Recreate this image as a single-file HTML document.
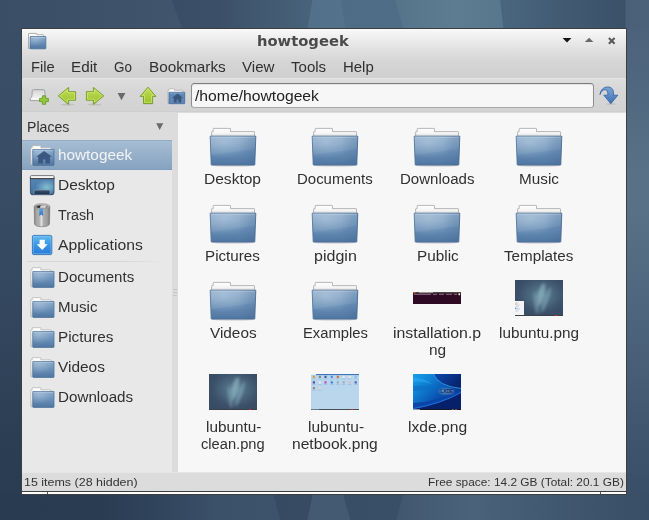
<!DOCTYPE html>
<html><head><meta charset="utf-8"><title>howtogeek</title>
<style>
*{margin:0;padding:0;box-sizing:border-box}
html,body{width:649px;height:520px;overflow:hidden}
body{position:relative;font-family:"Liberation Sans",sans-serif;color:#303030;background:#3a4f67}
#bgL{left:0;top:0;width:22px;height:520px;background:linear-gradient(#3a4e66 0%,#394e66 30%,#34485f 55%,#2b3e54 85%,#293b51 100%)}
#bgR{left:626px;top:0;width:23px;height:520px;background:linear-gradient(#4a5f78 0%,#4f677e 15%,#587186 33%,#587186 40%,#4f677e 58%,#435a72 77%,#3a4f68 93%,#384d66 100%)}
.abs{position:absolute}
.t{position:absolute;white-space:nowrap;line-height:1;transform-origin:0 0}
svg{position:absolute;overflow:visible}
#frame{left:21px;top:28px;width:606px;height:467px;background:#3e3e3e}
#win{left:22px;top:29px;width:604px;height:462px;background:#dcdcdc}
#botw{left:22px;top:492px;width:604px;height:2px;background:#fdfdfd}
#head{left:22px;top:29px;width:604px;height:49px;background:linear-gradient(#f9f9f9 0%,#ececec 22%,#e0e0e0 43%,#d7d7d7 63%,#d2d2d2 84%,#cfcfcf 100%)}
#tool{left:22px;top:78px;width:604px;height:34px;background:linear-gradient(#dedede,#d6d6d6 40%,#d3d3d3);border-top:1px solid #e4e4e4;border-bottom:1px solid #cecece}
#side{left:22px;top:140px;width:150px;height:332px;background:#e8e8e8}
#view{left:178px;top:113px;width:448px;height:359px;background:#f7f7f7}
#status{left:22px;top:472px;width:604px;height:19px;background:#dcdcdc;border-top:1px solid #e6e6e6}
.menu{font-size:15px}
.sb{font-size:15px}
.lab{font-size:15px}
.sel{left:22px;top:140px;width:150px;height:30px;background:linear-gradient(#a6bdd3,#87a3c1);border-top:1px solid #93adc8;border-bottom:1px solid #7f9cbc}
</style></head><body>

<svg width="0" height="0" style="position:absolute">
<defs>
<linearGradient id="gFront" x1="0" y1="0" x2="0" y2="1">
 <stop offset="0" stop-color="#8aabcb"/><stop offset="0.5" stop-color="#6a90b8"/><stop offset="1" stop-color="#4f76a1"/>
</linearGradient>
<radialGradient id="gHi" cx="0.3" cy="0.2" r="0.6">
 <stop offset="0" stop-color="#fff" stop-opacity="0.24"/><stop offset="1" stop-color="#fff" stop-opacity="0"/>
</radialGradient>
<linearGradient id="gRt" x1="0" y1="0" x2="1" y2="0"><stop offset="0" stop-color="#2a4a78" stop-opacity="0"/><stop offset="1" stop-color="#2a4a78" stop-opacity="0.16"/></linearGradient>
<linearGradient id="gBack" x1="0" y1="0" x2="0" y2="1">
 <stop offset="0" stop-color="#ffffff"/><stop offset="0.6" stop-color="#f4f4f4"/><stop offset="1" stop-color="#cfcfcf"/>
</linearGradient>
<linearGradient id="gGreen" x1="0" y1="0" x2="0" y2="1">
 <stop offset="0" stop-color="#c3de5a"/><stop offset="1" stop-color="#99c02c"/>
</linearGradient>
<linearGradient id="gApp" x1="0" y1="0" x2="0" y2="1">
 <stop offset="0" stop-color="#66bcf0"/><stop offset="0.45" stop-color="#3c98e8"/><stop offset="1" stop-color="#2a7ad6"/>
</linearGradient>
<linearGradient id="gCan" x1="0" y1="0" x2="1" y2="0">
 <stop offset="0" stop-color="#787878"/><stop offset="0.12" stop-color="#a4a4a4"/><stop offset="0.34" stop-color="#b4b4b4"/><stop offset="0.47" stop-color="#e2e2e2"/><stop offset="0.58" stop-color="#b0b0b0"/><stop offset="0.85" stop-color="#9a9a9a"/><stop offset="1" stop-color="#767676"/>
</linearGradient>
<linearGradient id="gDesk" x1="0" y1="0" x2="0" y2="1">
 <stop offset="0" stop-color="#5a84b2"/><stop offset="0.6" stop-color="#4c7cac"/><stop offset="1" stop-color="#3a6898"/>
</linearGradient>
<linearGradient id="gPanel" x1="0" y1="0" x2="0" y2="1">
 <stop offset="0" stop-color="#3c5470"/><stop offset="1" stop-color="#1c2e48"/>
</linearGradient>
<linearGradient id="gStk" x1="0" y1="0" x2="0" y2="1">
 <stop offset="0" stop-color="#58a6e8"/><stop offset="1" stop-color="#2a76c6"/>
</linearGradient>
<radialGradient id="gDeskHi" cx="0.7" cy="0.55" r="0.5">
 <stop offset="0" stop-color="#8fd0dc" stop-opacity="0.8"/><stop offset="1" stop-color="#8fd0dc" stop-opacity="0"/>
</radialGradient>
<linearGradient id="gTab" x1="0" y1="0" x2="0" y2="1">
 <stop offset="0" stop-color="#d4d4d4"/><stop offset="1" stop-color="#fbfbfb"/>
</linearGradient>
<linearGradient id="gGo" x1="0" y1="0" x2="0" y2="1">
 <stop offset="0" stop-color="#7aa6d8"/><stop offset="1" stop-color="#3f70b4"/>
</linearGradient>
<radialGradient id="gWall" cx="0.55" cy="0.42" r="0.6">
 <stop offset="0" stop-color="#688c9e"/><stop offset="0.35" stop-color="#4e6b81"/><stop offset="0.8" stop-color="#3b5169"/><stop offset="1" stop-color="#384d65"/>
</radialGradient>
<filter id="blur1" x="-50%" y="-50%" width="200%" height="200%"><feGaussianBlur stdDeviation="1.6"/></filter>
<filter id="blur05" x="-50%" y="-50%" width="200%" height="200%"><feGaussianBlur stdDeviation="0.8"/></filter>
<clipPath id="cpA"><rect x="515" y="280" width="48" height="36"/></clipPath>
<clipPath id="cpB"><rect x="209" y="374" width="48" height="36"/></clipPath>
<clipPath id="cpC"><rect x="413" y="374" width="48" height="36"/></clipPath>
<linearGradient id="gLxD" x1="0" y1="0" x2="1" y2="0.5">
 <stop offset="0" stop-color="#0c48ac"/><stop offset="1" stop-color="#062470"/>
</linearGradient>
<linearGradient id="gLx" x1="0" y1="0" x2="1" y2="0.75">
 <stop offset="0" stop-color="#16a0ec"/><stop offset="0.3" stop-color="#0f80d4"/><stop offset="0.62" stop-color="#0a54b0"/><stop offset="1" stop-color="#062878"/>
</linearGradient>

<!-- big folder 48x38 (origin at x=209,y=127 relative offsets) -->
<symbol id="folder" viewBox="0 0 48 40" overflow="visible">
 <ellipse cx="24" cy="38.6" rx="21" ry="1.2" fill="#000" opacity="0.13"/>
 <path d="M2.6 9 L2.6 5.1 Q2.6 4.6 3.1 4.6 L4.2 4.6 L4.2 1.9 Q4.2 1.4 4.7 1.4 L21 1.4 Q21.5 1.4 21.5 1.9 L21.5 4.6 L45 4.6 Q45.5 4.6 45.5 5.1 L45.5 10 L2.6 10 Z" fill="url(#gBack)" stroke="#a6a6a6" stroke-width="0.8"/>
 <path d="M1.2 9.2 L46.8 9.2 L45.8 37.6 Q45.8 38.1 45.3 38.1 L2.7 38.1 Q2.2 38.1 2.2 37.6 Z" fill="url(#gFront)" stroke="#4c6f97" stroke-width="0.9"/>
 <path d="M1.2 9.2 L46.8 9.2 L45.8 37.6 L2.2 37.6 Z" fill="url(#gHi)"/>
 <path d="M2.2 10.2 L45.8 10.2" stroke="#b4cbe0" stroke-width="0.9" opacity="0.9"/>
 <path d="M1.8 9.8 L46.2 9.8 L45.6 22 Q24 25 2.3 28 Z" fill="#fff" opacity="0.07"/>
 <path d="M30 9.2 L46.8 9.2 L45.8 37.6 L30 37.6 Z" fill="url(#gRt)"/>
</symbol>

<!-- small folder 24x21 -->
<symbol id="sfolder" viewBox="0 0 25 22" overflow="visible" preserveAspectRatio="none">
 <path d="M0.8 19.6 L0.8 3.4 Q0.8 2.9 1.3 2.9 L2.2 2.9 L2.2 1.2 Q2.2 0.7 2.7 0.7 L10.4 0.7 Q10.9 0.7 10.9 1.2 L10.9 2.9 L20.6 2.9 Q21.1 2.9 21.1 3.4 L21.1 6 L3 6 L3 19.6 Q3 20 2.4 20.2 L1.4 20.2 Q0.8 20.2 0.8 19.6 Z" fill="url(#gBack)" stroke="#b0b0b0" stroke-width="0.7"/>
 <path d="M2.8 4.6 L24 4.6 L24 20.4 Q24 20.9 23.5 20.9 L3.3 20.9 Q2.8 20.9 2.8 20.4 Z" fill="url(#gFront)" stroke="#4f739b" stroke-width="0.8"/>
 <path d="M2.8 4.6 L24 4.6 L24 20.4 L2.8 20.4 Z" fill="url(#gHi)"/>
 <path d="M3.6 5.5 L23.3 5.5" stroke="#b4cbe0" stroke-width="0.8" opacity="0.8"/>
</symbol>

<symbol id="house" viewBox="0 0 17 13" overflow="visible">
 <path d="M8.4 0 L16.6 6 L14.4 6 L14.4 12.8 L9.8 12.8 L9.8 8.6 L7.2 8.6 L7.2 12.8 L2.3 12.8 L2.3 6 L0.2 6 Z" fill="#3a5880"/>
</symbol>
</defs>
</svg>

<div class="abs" id="bgL"></div><div class="abs" id="bgR"></div><svg style="left:0;top:0px" width="649" height="29" viewBox="0 0 649 29"><defs><linearGradient id="gt0" gradientUnits="userSpaceOnUse" x1="0" y1="0" x2="183" y2="0"><stop offset="0.000" stop-color="#3a4e66"/><stop offset="0.546" stop-color="#3d5269"/><stop offset="1.000" stop-color="#41566d"/></linearGradient><linearGradient id="gt1" gradientUnits="userSpaceOnUse" x1="172" y1="0" x2="313" y2="0"><stop offset="0.000" stop-color="#394e66"/><stop offset="0.319" stop-color="#3b5068"/><stop offset="1.000" stop-color="#48637b"/></linearGradient><linearGradient id="gt2" gradientUnits="userSpaceOnUse" x1="308" y1="0" x2="345.8" y2="0"><stop offset="0.000" stop-color="#52708a"/><stop offset="1.000" stop-color="#54728b"/></linearGradient><linearGradient id="gt3" gradientUnits="userSpaceOnUse" x1="341.4" y1="0" x2="404" y2="0"><stop offset="0.000" stop-color="#4e6c85"/><stop offset="1.000" stop-color="#4f6d86"/></linearGradient><linearGradient id="gt4" gradientUnits="userSpaceOnUse" x1="396" y1="0" x2="504" y2="0"><stop offset="0.000" stop-color="#567489"/><stop offset="0.546" stop-color="#5d7c92"/><stop offset="1.000" stop-color="#58778d"/></linearGradient><linearGradient id="gt5" gradientUnits="userSpaceOnUse" x1="500.6" y1="0" x2="626" y2="0"><stop offset="0.000" stop-color="#4a667f"/><stop offset="0.474" stop-color="#425b73"/><stop offset="1.000" stop-color="#3a5168"/></linearGradient><linearGradient id="gt6" gradientUnits="userSpaceOnUse" x1="626" y1="0" x2="649" y2="0"><stop offset="0.000" stop-color="#4a5f78"/><stop offset="1.000" stop-color="#4b617a"/></linearGradient></defs><polygon points="-0.5,0 172.5,0 183.5,29 -0.5,29" fill="url(#gt0)"/><polygon points="171.5,0 313.5,0 308.5,29 182.5,29" fill="url(#gt1)"/><polygon points="312.5,0 341.9,0 346.3,29 307.5,29" fill="url(#gt2)"/><polygon points="340.9,0 396.5,0 404.5,29 345.3,29" fill="url(#gt3)"/><polygon points="395.5,0 501.1,0 504.5,29 403.5,29" fill="url(#gt4)"/><polygon points="500.1,0 626.5,0 626.5,29 503.5,29" fill="url(#gt5)"/><polygon points="625.5,0 649.5,0 649.5,29 625.5,29" fill="url(#gt6)"/></svg><svg style="left:0;top:494px" width="649" height="26" viewBox="0 494 649 26"><defs><linearGradient id="gb0" gradientUnits="userSpaceOnUse" x1="0" y1="0" x2="280.5" y2="0"><stop offset="0.000" stop-color="#293b51"/><stop offset="0.357" stop-color="#2a3c52"/><stop offset="0.535" stop-color="#2f435a"/><stop offset="0.774" stop-color="#3b5069"/><stop offset="1.000" stop-color="#3d526b"/></linearGradient><linearGradient id="gb1" gradientUnits="userSpaceOnUse" x1="273.9" y1="0" x2="313.3" y2="0"><stop offset="0.000" stop-color="#364a62"/><stop offset="1.000" stop-color="#374b63"/></linearGradient><linearGradient id="gb2" gradientUnits="userSpaceOnUse" x1="308" y1="0" x2="350.8" y2="0"><stop offset="0.000" stop-color="#445a73"/><stop offset="1.000" stop-color="#445a73"/></linearGradient><linearGradient id="gb3" gradientUnits="userSpaceOnUse" x1="343.4" y1="0" x2="403.6" y2="0"><stop offset="0.000" stop-color="#384d66"/><stop offset="1.000" stop-color="#394e67"/></linearGradient><linearGradient id="gb4" gradientUnits="userSpaceOnUse" x1="397" y1="0" x2="649" y2="0"><stop offset="0.000" stop-color="#41576f"/><stop offset="0.147" stop-color="#465d76"/><stop offset="0.290" stop-color="#4b627b"/><stop offset="0.567" stop-color="#435a73"/><stop offset="1.000" stop-color="#384d66"/></linearGradient></defs><polygon points="-0.5,494 274.4,494 281.0,520 -0.5,520" fill="url(#gb0)"/><polygon points="273.4,494 313.8,494 308.5,520 280.0,520" fill="url(#gb1)"/><polygon points="312.8,494 343.9,494 351.3,520 307.5,520" fill="url(#gb2)"/><polygon points="342.9,494 404.1,494 397.5,520 350.3,520" fill="url(#gb3)"/><polygon points="403.1,494 649.5,494 649.5,520 396.5,520" fill="url(#gb4)"/></svg><div class="abs" id="frame"></div><div class="abs" id="win"></div><div class="abs" id="botw"></div><div class="abs" id="head"></div><div class="abs" id="tool"></div><div class="abs" id="side"></div><div class="abs" id="view"></div><div class="abs" id="status"></div>
<svg style="left:0;top:0" width="649" height="520"><path d="M28.5 48.4 V34 Q28.5 33.4 29.1 33.4 H36.2 Q36.8 33.4 36.8 34 V34.7 H43 Q43.6 34.7 43.6 35.3 V37 H30.4 V48.4 Z" fill="url(#gBack)" stroke="#9c9c9c" stroke-width="0.8"/><path d="M30.2 36.6 H45.8 V48.3 Q45.8 48.8 45.3 48.8 H30.7 Q30.2 48.8 30.2 48.3 Z" fill="url(#gFront)" stroke="#4a6d97" stroke-width="0.8"/><path d="M30.2 36.6 H45.8 V48.3 H30.2 Z" fill="url(#gHi)"/><path d="M30.9 37.5 H45.1" stroke="#bdd2e6" stroke-width="0.8" opacity="0.85"/></svg>
<svg style="left:0;top:0" width="649" height="520"><path d="M562.6 38 L571.4 38 L567 42.4 Z" fill="#141414"/><path d="M584.8 42 L593.4 42 L589.1 37.7 Z" fill="#6a6a6a"/><path d="M608.9 38 L614.6 43.7 M614.6 38 L608.9 43.7" stroke="#5a5a5a" stroke-width="2.1" stroke-linecap="butt"/></svg>
<svg style="left:0;top:0" width="649" height="520"><path d="M30.2 100.6 L30.2 98.6 Q31.9 97.6 32 95.5 L32.2 91 Q32.3 89.7 33.6 89.7 L43.4 89.7 Q44.7 89.7 44.8 91 L45 95.5 Q45.1 97.6 46.8 98.6 L46.8 100.6 Z" fill="url(#gTab)" stroke="#9a9a9a" stroke-width="0.9"/><path d="M42.3 95.8 L45.6 95.8 L45.6 98.4 L48.4 98.4 L48.4 101.6 L45.6 101.6 L45.6 104.3 L42.3 104.3 L42.3 101.6 L39.5 101.6 L39.5 98.4 L42.3 98.4 Z" fill="#92c83c" stroke="#6a9e2a" stroke-width="0.9" stroke-linejoin="round"/><ellipse cx="67.5" cy="104.6" rx="7" ry="1" fill="#000" opacity="0.1"/><path d="M58.3 95.9 L68.6 87.4 L68.6 91.7 L75.6 91.7 L75.6 100.2 L68.6 100.2 L68.6 104.4 Z" fill="url(#gGreen)" stroke="#76a026" stroke-width="1" stroke-linejoin="round"/><ellipse cx="94.5" cy="104.6" rx="7" ry="1" fill="#000" opacity="0.1"/><path d="M103.7 95.9 L93.4 87.4 L93.4 91.7 L86.4 91.7 L86.4 100.2 L93.4 100.2 L93.4 104.4 Z" fill="url(#gGreen)" stroke="#76a026" stroke-width="1" stroke-linejoin="round"/><path d="M59.9 95.9 L67.6 89.5 L67.6 92.7 L74.6 92.7 L74.6 99.2 L67.6 99.2 L67.6 102.3 Z" fill="none" stroke="#d2ea7c" stroke-width="0.8" opacity="0.85"/><path d="M102.1 95.9 L94.4 89.5 L94.4 92.7 L87.4 92.7 L87.4 99.2 L94.4 99.2 L94.4 102.3 Z" fill="none" stroke="#d2ea7c" stroke-width="0.8" opacity="0.85"/><path d="M117.6 93 L125.4 93 L121.5 100.3 Z" fill="#6a6a6a"/><ellipse cx="148" cy="103.9" rx="6" ry="0.9" fill="#000" opacity="0.1"/><path d="M148 87.2 L155.9 96.4 L152.6 96.4 L152.6 103.4 L143.5 103.4 L143.5 96.4 L140.2 96.4 Z" fill="url(#gGreen)" stroke="#76a026" stroke-width="1" stroke-linejoin="round"/><path d="M148 88.8 L153.7 95.4 L151.6 95.4 L151.6 102.4 L144.5 102.4 L144.5 95.4 L142.4 95.4 Z" fill="none" stroke="#d2ea7c" stroke-width="0.8" opacity="0.85"/><ellipse cx="610.8" cy="104" rx="5" ry="0.8" fill="#000" opacity="0.1"/><path d="M600 94.6 C600.5 90 603.5 87 607.5 87 C611.5 87 613.5 89.5 613.5 92.5 L613.5 95.2 L617.8 95.2 L610.8 103.7 L603.8 95.2 L607.8 95.2 L607.8 93.5 C607.8 91 606.6 89.7 605 89.7 C602.8 89.7 601 91.6 600 94.6 Z" fill="url(#gGo)" stroke="#2f5f9f" stroke-width="0.8" stroke-linejoin="round"/></svg>
<svg style="left:0;top:0" width="649" height="520"><path d="M168 103.3 V90.8 Q168 90.3 168.5 90.3 H169 V89.3 Q169 88.8 169.5 88.8 H174 Q174.5 88.8 174.5 89.3 V90.3 H182.2 Q182.7 90.3 182.7 90.8 V92.6 H169.4 V103.3 Z" fill="url(#gBack)" stroke="#a8a8a8" stroke-width="0.7"/><path d="M169 92.3 H184.7 V103.2 Q184.7 103.7 184.2 103.7 H169.5 Q169 103.7 169 103.2 Z" fill="#5f87b6" stroke="#446a9a" stroke-width="0.8"/><path d="M169.7 93.1 H184" stroke="#a9c2dc" stroke-width="0.7" opacity="0.8"/><path d="M177.5 93.5 L183 97.9 L181.3 97.9 L181.3 102.5 L178.4 102.5 L178.4 99.6 L176.7 99.6 L176.7 102.5 L173.8 102.5 L173.8 97.9 L172.1 97.9 Z" fill="#3a567c"/></svg>
<div class="abs" style="left:190.5px;top:83px;width:403.5px;height:25px;background:#f7f7f7;border:1px solid #8e8e8e;border-top-color:#7c7c7c;border-bottom-color:#a8a8a8;border-radius:3.5px;box-shadow:inset 0 1px 1px rgba(0,0,0,.08)"></div>
<div class="abs" style="left:47px;top:492px;width:1px;height:2px;background:#555"></div><div class="abs" style="left:600px;top:492px;width:1px;height:2px;background:#555"></div>
<svg style="left:0;top:0" width="649" height="520"><path d="M156.2 123.3 L163.2 123.3 L159.7 130 Z" fill="#6a6a6a"/></svg>
<div class="abs sel"></div>
<div class="abs" style="left:27px;top:261px;width:138px;height:1px;background:linear-gradient(90deg,#d6d6d6 70%,rgba(214,214,214,0))"></div>
<div class="abs" style="left:173px;top:289px;width:4px;height:1px;background:#c6c6c6;box-shadow:0 3px 0 #c6c6c6,0 6px 0 #c6c6c6"></div>
<svg style="left:29.8px;top:144.9px" width="25" height="21.5"><use href="#sfolder" width="25" height="21.5"/></svg>
<svg style="left:36px;top:151px" width="16.4" height="12.7"><use href="#house" width="16.4" height="12.7"/></svg>
<svg style="left:0;top:0" width="649" height="520"><path d="M30.4 177 L30.4 192.6 Q30.4 194.7 32.5 194.7 L51.9 194.7 Q54 194.7 54 192.6 L54 177 Z" fill="url(#gDesk)" stroke="#2c486c" stroke-width="0.8"/><path d="M30.8 178.8 L53.6 178.8 L53.6 192.6 Q53.6 194.3 51.9 194.3 L32.5 194.3 Q30.8 194.3 30.8 192.6 Z" fill="url(#gDeskHi)"/><path d="M30.4 178.6 L30.4 176.6 Q30.4 175.6 31.4 175.6 L53 175.6 Q54 175.6 54 176.6 L54 178.6 Z" fill="#f6f6f6" stroke="#5c5c5c" stroke-width="0.8"/><rect x="30" y="178.2" width="24.4" height="0.9" fill="#3e3e3e"/><rect x="34" y="190" width="16" height="4.6" fill="url(#gPanel)" stroke="#9ab8d2" stroke-width="0.5"/><rect x="30.8" y="194.3" width="22.8" height="0.6" fill="#1c3050" opacity="0.6"/><path d="M34.2 206.4 L34.5 223.6 Q34.7 226.7 42 226.7 Q49.3 226.7 49.5 223.6 L49.8 206.4 Z" fill="url(#gCan)" stroke="#707070" stroke-width="0.6"/><ellipse cx="42" cy="206.3" rx="7.8" ry="2.6" fill="#b8b8b8" stroke="#8a8a8a" stroke-width="0.6"/><ellipse cx="41.6" cy="206.6" rx="6.2" ry="1.7" fill="#6a6a6a"/><path d="M37 206.9 Q38.4 205.6 40.4 205.9 L39.6 207.8 Q38 208 37 206.9 Z" fill="#2a2a2a"/><path d="M40.6 205.8 Q43.5 204.9 46.8 205.8 L45 208 Q42.5 207.4 40.2 207.9 Z" fill="#e4e4e6" opacity="0.9"/><rect x="43.2" y="205.6" width="1.2" height="1" fill="#e8a8d8" opacity="0.8"/><path d="M39.3 208.4 L43 208.7 L43 215.9 L41.2 214.5 L39.3 215.9 Z" fill="url(#gStk)"/><rect x="32.4" y="235.4" width="19.4" height="19.2" rx="1.4" fill="url(#gApp)" stroke="#1c5fa6" stroke-width="0.8"/><rect x="33.2" y="236.2" width="17.8" height="17.6" rx="0.8" fill="none" stroke="#9ad4f8" stroke-width="0.7" opacity="0.7"/><path d="M39.6 239.8 L44.8 239.8 L44.8 244.2 L47.7 244.2 L42.2 250 L36.7 244.2 L39.6 244.2 Z" fill="#fff"/></svg>
<svg style="left:29.8px;top:266.9px" width="25" height="21.5"><use href="#sfolder" width="25" height="21.5"/></svg>
<svg style="left:29.8px;top:296.9px" width="25" height="21.5"><use href="#sfolder" width="25" height="21.5"/></svg>
<svg style="left:29.8px;top:326.9px" width="25" height="21.5"><use href="#sfolder" width="25" height="21.5"/></svg>
<svg style="left:29.8px;top:356.9px" width="25" height="21.5"><use href="#sfolder" width="25" height="21.5"/></svg>
<svg style="left:29.8px;top:386.9px" width="25" height="21.5"><use href="#sfolder" width="25" height="21.5"/></svg>
<svg style="left:209px;top:126.8px" width="48" height="40"><use href="#folder" width="48" height="40"/></svg>
<svg style="left:311px;top:126.8px" width="48" height="40"><use href="#folder" width="48" height="40"/></svg>
<svg style="left:413px;top:126.8px" width="48" height="40"><use href="#folder" width="48" height="40"/></svg>
<svg style="left:515px;top:126.8px" width="48" height="40"><use href="#folder" width="48" height="40"/></svg>
<svg style="left:209px;top:203.8px" width="48" height="40"><use href="#folder" width="48" height="40"/></svg>
<svg style="left:311px;top:203.8px" width="48" height="40"><use href="#folder" width="48" height="40"/></svg>
<svg style="left:413px;top:203.8px" width="48" height="40"><use href="#folder" width="48" height="40"/></svg>
<svg style="left:515px;top:203.8px" width="48" height="40"><use href="#folder" width="48" height="40"/></svg>
<svg style="left:209px;top:280.8px" width="48" height="40"><use href="#folder" width="48" height="40"/></svg>
<svg style="left:311px;top:280.8px" width="48" height="40"><use href="#folder" width="48" height="40"/></svg>
<svg style="left:0;top:0" width="649" height="520"><rect x="413" y="292" width="48" height="12" fill="#2e0a24"/><rect x="413" y="292" width="48" height="1.3" fill="#4a4843"/><rect x="413.5" y="292.1" width="2" height="1.1" fill="#e07030"/><rect x="419" y="292.2" width="14" height="0.9" fill="#c8c4bc" opacity="0.8"/><path d="M414 294.3 H431 M433 294.3 H437 M439 294.3 H444 M446 294.3 H452 M454 294.3 H457" stroke="#c9b8c6" stroke-width="0.8" opacity="0.75"/><rect x="458.5" y="293.4" width="1.6" height="1.8" fill="#fff"/><g clip-path="url(#cpA)"><rect x="515" y="280" width="48" height="36" fill="url(#gWall)"/><g filter="url(#blur1)" opacity="0.8"><ellipse cx="541" cy="295" rx="3.2" ry="12" fill="#86acb8" transform="rotate(14 541 295)"/><ellipse cx="546" cy="300" rx="2" ry="13" fill="#7a9fb0" transform="rotate(20 546 300)"/><ellipse cx="536" cy="303" rx="2" ry="11" fill="#6f93a6" transform="rotate(-8 536 303)"/></g></g><rect x="515" y="301" width="9" height="14" fill="#f2f4f6"/><path d="M515.6 303 H518.4 M515.6 305 H519.4 M515.6 307 H518.6 M515.6 309 H520 M515.6 311 H518.2" stroke="#a8b4c4" stroke-width="0.6"/><rect x="515" y="303.4" width="1.2" height="1.2" fill="#e0b040"/><rect x="515" y="307.8" width="1.2" height="1.2" fill="#4a90d8"/><rect x="515" y="315" width="48" height="1" fill="#3a4048"/><rect x="555" y="315" width="2.4" height="1" fill="#c03030"/><g clip-path="url(#cpB)"><rect x="209" y="374" width="48" height="36" fill="url(#gWall)"/><g filter="url(#blur1)" opacity="0.8"><ellipse cx="235" cy="389" rx="3.2" ry="12" fill="#86acb8" transform="rotate(14 235 389)"/><ellipse cx="240" cy="394" rx="2" ry="13" fill="#7a9fb0" transform="rotate(20 240 394)"/><ellipse cx="230" cy="397" rx="2" ry="11" fill="#6f93a6" transform="rotate(-8 230 397)"/></g></g><rect x="209" y="409" width="48" height="1" fill="#3a4048"/><rect x="249" y="409" width="2.4" height="1" fill="#c03030"/><rect x="311" y="374" width="48" height="36" fill="#b9d6ec"/><rect x="311" y="374" width="48" height="1.1" fill="#3f74ba"/><rect x="311" y="374" width="5" height="1.1" fill="#e8eef6"/><rect x="311" y="409" width="48" height="1" fill="#4a4c54"/><rect x="351" y="409" width="2.2" height="1" fill="#c03038"/><rect x="311" y="409" width="8" height="1" fill="#6a7a90"/>
<rect x="312.8" y="375.7" width="2.2" height="2.3" rx="0.4" fill="#e89030" opacity="0.9"/><rect x="311.9" y="378.6" width="4" height="0.7" fill="#8fb4d8" opacity="0.7"/><rect x="318.8" y="375.7" width="2.2" height="2.3" rx="0.4" fill="#8a8078" opacity="0.9"/><rect x="317.9" y="378.6" width="4" height="0.7" fill="#8fb4d8" opacity="0.7"/><rect x="324.4" y="375.7" width="2.2" height="2.3" rx="0.4" fill="#3a4a90" opacity="0.9"/><rect x="323.5" y="378.6" width="4" height="0.7" fill="#8fb4d8" opacity="0.7"/><rect x="330.7" y="375.7" width="2.2" height="2.3" rx="0.4" fill="#3a8ae0" opacity="0.9"/><rect x="329.8" y="378.6" width="4" height="0.7" fill="#8fb4d8" opacity="0.7"/><rect x="336.7" y="375.7" width="2.2" height="2.3" rx="0.4" fill="#d86030" opacity="0.9"/><rect x="335.8" y="378.6" width="4" height="0.7" fill="#8fb4d8" opacity="0.7"/><rect x="342.6" y="375.7" width="2.2" height="2.3" rx="0.4" fill="#e8ecf2" opacity="0.9"/><rect x="341.7" y="378.6" width="4" height="0.7" fill="#8fb4d8" opacity="0.7"/><rect x="348.6" y="375.7" width="2.2" height="2.3" rx="0.4" fill="#f0e8e8" opacity="0.9"/><rect x="347.7" y="378.6" width="4" height="0.7" fill="#8fb4d8" opacity="0.7"/><rect x="354.6" y="375.7" width="2.2" height="2.3" rx="0.4" fill="#7ac0f0" opacity="0.9"/><rect x="353.7" y="378.6" width="4" height="0.7" fill="#8fb4d8" opacity="0.7"/><rect x="312.8" y="381.3" width="2.2" height="2.3" rx="0.4" fill="#4a3a98" opacity="0.9"/><rect x="311.9" y="384.2" width="4" height="0.7" fill="#8fb4d8" opacity="0.7"/><rect x="318.8" y="381.3" width="2.2" height="2.3" rx="0.4" fill="#e6eef8" opacity="0.9"/><rect x="317.9" y="384.2" width="4" height="0.7" fill="#8fb4d8" opacity="0.7"/><rect x="324.4" y="381.3" width="2.2" height="2.3" rx="0.4" fill="#c838b0" opacity="0.9"/><rect x="323.5" y="384.2" width="4" height="0.7" fill="#8fb4d8" opacity="0.7"/><rect x="330.7" y="381.3" width="2.2" height="2.3" rx="0.4" fill="#2a7ae0" opacity="0.9"/><rect x="329.8" y="384.2" width="4" height="0.7" fill="#8fb4d8" opacity="0.7"/><rect x="336.7" y="381.3" width="2.2" height="2.3" rx="0.4" fill="#98a4b4" opacity="0.9"/><rect x="335.8" y="384.2" width="4" height="0.7" fill="#8fb4d8" opacity="0.7"/><rect x="342.6" y="381.3" width="2.2" height="2.3" rx="0.4" fill="#a0a8b8" opacity="0.9"/><rect x="341.7" y="384.2" width="4" height="0.7" fill="#8fb4d8" opacity="0.7"/><rect x="348.6" y="381.3" width="2.2" height="2.3" rx="0.4" fill="#d8b8c0" opacity="0.9"/><rect x="347.7" y="384.2" width="4" height="0.7" fill="#8fb4d8" opacity="0.7"/><rect x="354.6" y="381.3" width="2.2" height="2.3" rx="0.4" fill="#3858a8" opacity="0.9"/><rect x="353.7" y="384.2" width="4" height="0.7" fill="#8fb4d8" opacity="0.7"/><rect x="312.8" y="386.9" width="2.2" height="2.3" rx="0.4" fill="#a08078" opacity="0.9"/><rect x="311.9" y="389.8" width="4" height="0.7" fill="#8fb4d8" opacity="0.7"/><rect x="318.8" y="386.9" width="2.2" height="2.3" rx="0.4" fill="#e8d8c0" opacity="0.9"/><rect x="317.9" y="389.8" width="4" height="0.7" fill="#8fb4d8" opacity="0.7"/>
<g clip-path="url(#cpC)"><rect x="413" y="374" width="48" height="36" fill="url(#gLx)"/><path d="M433.5 374 Q438 386 461 388.5 L461 374 Z" fill="url(#gLxD)"/><path d="M413 409 Q440 404 461 392.5 L461 410 L413 410 Z" fill="#06206a"/><path d="M413 403 Q436 402 461 390 L461 393 Q440 405 413 409 Z" fill="#0a44a8" opacity="0.9"/><path d="M433.5 374 Q438 386 461 388.5" stroke="#38b0f8" stroke-width="0.8" fill="none" opacity="0.9"/><path d="M413 408.6 Q440 404 461 392.5" stroke="#2a84e8" stroke-width="0.8" fill="none" opacity="0.9"/><path d="M413 386 Q430 384.5 446 387.5 Q430 390 413 391 Z" fill="#0a6cc0" opacity="0.55"/><path d="M413 378 Q424 377 432 384 Q424 381 413 381.5 Z" fill="#30b4f4" opacity="0.45"/></g><ellipse cx="446.6" cy="391.4" rx="7.4" ry="2.8" fill="#9cc4f0" opacity="0.55" filter="url(#blur05)"/><text x="440.4" y="393.2" font-family="Liberation Sans, sans-serif" font-size="5.2" font-weight="bold" fill="#14244c" textLength="12.6" lengthAdjust="spacingAndGlyphs">LXDE</text><rect x="413" y="409" width="48" height="1" fill="#161a28"/><rect x="413" y="409" width="7" height="1" fill="#8a98a8"/><rect x="455" y="409" width="2" height="1" fill="#b03040"/><rect x="452" y="409" width="1.6" height="1" fill="#30a040"/></svg>
<div class="t" style="left:257px;top:34px;font-size:14.5px;transform:scaleX(1.0156);font-family:'DejaVu Sans','Liberation Sans',sans-serif;font-weight:bold;color:#4a4a4a">howtogeek</div>
<div class="t" style="left:31px;top:60px;font-size:14px;transform:scaleX(1.0521);">File</div>
<div class="t" style="left:71px;top:60px;font-size:14px;transform:scaleX(1.0884);">Edit</div>
<div class="t" style="left:114px;top:60px;font-size:14px;transform:scaleX(0.9585);">Go</div>
<div class="t" style="left:149px;top:60px;font-size:14px;transform:scaleX(1.0963);">Bookmarks</div>
<div class="t" style="left:242px;top:60px;font-size:14px;transform:scaleX(1.0790);">View</div>
<div class="t" style="left:291px;top:60px;font-size:14px;transform:scaleX(1.0742);">Tools</div>
<div class="t" style="left:343px;top:60px;font-size:14px;transform:scaleX(1.0669);">Help</div>
<div class="t" style="left:195px;top:89px;font-size:14px;transform:scaleX(1.1216);color:#222">/home/howtogeek</div>
<div class="t" style="left:27px;top:120px;font-size:14px;transform:scaleX(1.0074);">Places</div>
<div class="t" style="left:58px;top:148px;font-size:14px;transform:scaleX(1.0946);color:#f4f4f4">howtogeek</div>
<div class="t" style="left:58px;top:178px;font-size:14px;transform:scaleX(1.1055);">Desktop</div>
<div class="t" style="left:58px;top:208px;font-size:14px;transform:scaleX(1.0195);">Trash</div>
<div class="t" style="left:58px;top:238px;font-size:14px;transform:scaleX(1.1231);">Applications</div>
<div class="t" style="left:58px;top:270px;font-size:14px;transform:scaleX(1.0757);">Documents</div>
<div class="t" style="left:58px;top:300px;font-size:14px;transform:scaleX(1.0785);">Music</div>
<div class="t" style="left:58px;top:330px;font-size:14px;transform:scaleX(1.0937);">Pictures</div>
<div class="t" style="left:58px;top:360px;font-size:14px;transform:scaleX(1.1017);">Videos</div>
<div class="t" style="left:58px;top:390px;font-size:14px;transform:scaleX(1.0849);">Downloads</div>
<div class="t" style="left:204px;top:172px;font-size:14px;transform:scaleX(1.1099);">Desktop</div>
<div class="t" style="left:297px;top:172px;font-size:14px;transform:scaleX(1.0692);">Documents</div>
<div class="t" style="left:400px;top:172px;font-size:14px;transform:scaleX(1.0750);">Downloads</div>
<div class="t" style="left:519px;top:172px;font-size:14px;transform:scaleX(1.0919);">Music</div>
<div class="t" style="left:205px;top:249px;font-size:14px;transform:scaleX(1.0858);">Pictures</div>
<div class="t" style="left:314px;top:249px;font-size:14px;transform:scaleX(1.1458);">pidgin</div>
<div class="t" style="left:417px;top:249px;font-size:14px;transform:scaleX(1.0936);">Public</div>
<div class="t" style="left:504px;top:249px;font-size:14px;transform:scaleX(1.0855);">Templates</div>
<div class="t" style="left:210px;top:326px;font-size:14px;transform:scaleX(1.0945);">Videos</div>
<div class="t" style="left:303px;top:326px;font-size:14px;transform:scaleX(1.0547);">Examples</div>
<div class="t" style="left:393px;top:326px;font-size:14px;transform:scaleX(1.1326);">installation.p</div>
<div class="t" style="left:429px;top:343px;font-size:14px;transform:scaleX(1.1023);">ng</div>
<div class="t" style="left:499px;top:326px;font-size:14px;transform:scaleX(1.0931);">lubuntu.png</div>
<div class="t" style="left:206px;top:420px;font-size:14px;transform:scaleX(1.0950);">lubuntu-</div>
<div class="t" style="left:201px;top:437px;font-size:14px;transform:scaleX(1.0477);">clean.png</div>
<div class="t" style="left:308px;top:420px;font-size:14px;transform:scaleX(1.1090);">lubuntu-</div>
<div class="t" style="left:292px;top:437px;font-size:14px;transform:scaleX(1.1119);">netbook.png</div>
<div class="t" style="left:408px;top:420px;font-size:14px;transform:scaleX(1.1173);">lxde.png</div>
<div class="t" style="left:24px;top:477px;font-size:11.5px;transform:scaleX(1.0836);color:#333">15 items (28 hidden)</div>
<div class="t" style="left:428px;top:477px;font-size:11.5px;transform:scaleX(1.0316);color:#333">Free space: 14.2 GB (Total: 20.1 GB)</div>
</body></html>
